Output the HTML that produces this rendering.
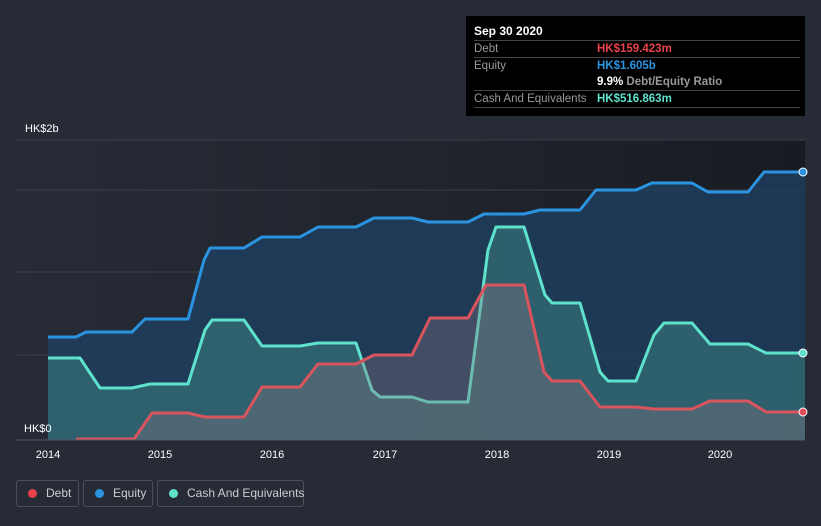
<!DOCTYPE html><html><head><style>
body{margin:0;background:#262b36;width:821px;height:526px;overflow:hidden;font-family:"Liberation Sans",sans-serif;position:relative}
.tip{position:absolute;left:466px;top:16px;width:339px;height:100px;background:#000;}
.tip .h{position:absolute;left:8px;top:8px;color:#fff;font-weight:bold;font-size:12px}
.row{position:absolute;left:8px;width:326px;border-top:1px solid #444;font-size:11.5px;color:#999;height:16px;line-height:16px;white-space:nowrap}
.row span{position:absolute;left:123px;font-weight:bold}
.leg{position:absolute;top:480px;height:27px;border:1px solid #4a4f5a;border-radius:3px;color:#ccc;font-size:12px;line-height:25px;box-sizing:border-box;white-space:nowrap}
.leg i{display:inline-block;width:9px;height:9px;border-radius:50%;margin:0 9px 0 11px;vertical-align:-1px}
</style></head><body>
<svg width="821" height="526" style="position:absolute;left:0;top:0">
<defs><linearGradient id="bg" x1="0" x2="1"><stop offset="0" stop-color="#262b36"/><stop offset="0.58" stop-color="#1f232b"/><stop offset="1" stop-color="#181b22"/></linearGradient></defs>
<rect x="16" y="140" width="789" height="300" fill="url(#bg)"/>
<line x1="16" y1="140" x2="805" y2="140" stroke="#3a3f4a"/>
<line x1="16" y1="190" x2="805" y2="190" stroke="#3a3f4a"/>
<line x1="16" y1="272" x2="805" y2="272" stroke="#3a3f4a"/>
<line x1="16" y1="355" x2="805" y2="355" stroke="#3a3f4a"/>
<polygon fill="#1e4060" fill-opacity="0.8" points="48,440 48,337 76,337 86,332 104,332 132,332 145,319 188,319 204,260 210,248 244,248 262,237 300,237 318,227 356,227 374,218 412,218 428,222 468,222 484,214 524,214 540,210 580,210 596,190 636,190 652,183 692,183 708,192 748,192 764,172 805,172 805,440"/>
<polyline fill="none" stroke="#2b94e0" stroke-width="3" stroke-linejoin="round" points="48,337 76,337 86,332 104,332 132,332 145,319 188,319 204,260 210,248 244,248 262,237 300,237 318,227 356,227 374,218 412,218 428,222 468,222 484,214 524,214 540,210 580,210 596,190 636,190 652,183 692,183 708,192 748,192 764,172 805,172"/>
<polygon fill="#3e8584" fill-opacity="0.5" points="48,440 48,358 80,358 100,388 132,388 150,384 188,384 205,330 212,320 244,320 262,346 300,346 318,343 356,343 372,390 380,397 412,397 428,402 468,402 488,250 496,227 524,227 545,295 552,303 580,303 600,372 608,381 636,381 654,335 664,323 692,323 710,344 748,344 766,353 805,353 805,440"/>
<polyline fill="none" stroke="#5ee2cc" stroke-width="3" stroke-linejoin="round" points="48,358 80,358 100,388 132,388 150,384 188,384 205,330 212,320 244,320 262,346 300,346 318,343 356,343 372,390 380,397 412,397 428,402 468,402 488,250 496,227 524,227 545,295 552,303 580,303 600,372 608,381 636,381 654,335 664,323 692,323 710,344 748,344 766,353 805,353"/>
<polygon fill="#8a7580" fill-opacity="0.35" points="76,440 76,439 134,439 152,413 188,413 205,417 244,417 262,387 300,387 318,364 356,364 374,355 412,355 430,318 468,318 486,285 524,285 544,372 552,381 580,381 600,407 636,407 654,409 692,409 710,401 748,401 766,412 805,412 805,440"/>
<polyline fill="none" stroke="#d9545c" stroke-width="3" stroke-linejoin="round" points="76,439 134,439 152,413 188,413 205,417 244,417 262,387 300,387 318,364 356,364 374,355 412,355 430,318 468,318 486,285 524,285 544,372 552,381 580,381 600,407 636,407 654,409 692,409 710,401 748,401 766,412 805,412"/>
<line x1="16" y1="440" x2="805" y2="440" stroke="#555a66"/>
<circle cx="803" cy="172" r="4" fill="#2b94e0" stroke="#fff"/>
<circle cx="803" cy="353" r="4" fill="#5ee2cc" stroke="#fff"/>
<circle cx="803" cy="412" r="4" fill="#e0505a" stroke="#fff"/>
<g fill="#fff" font-size="11" font-family="Liberation Sans">
<text x="25" y="132">HK$2b</text><text x="24" y="432">HK$0</text>
<g text-anchor="middle"><text x="48" y="458">2014</text><text x="160" y="458">2015</text><text x="272" y="458">2016</text><text x="385" y="458">2017</text><text x="497" y="458">2018</text><text x="609" y="458">2019</text><text x="720" y="458">2020</text></g>
</g>
</svg>
<div class="tip"><div class="h">Sep 30 2020</div>
<div class="row" style="top:24px">Debt<span style="color:#e8434b">HK$159.423m</span></div>
<div class="row" style="top:41px">Equity<span style="color:#2b94e0">HK$1.605b</span></div>
<div class="row" style="top:58px;border:none"><span style="color:#fff">9.9% <b style="color:#999">Debt/Equity Ratio</b></span></div>
<div class="row" style="top:74px;border-bottom:1px solid #444">Cash And Equivalents<span style="color:#5ee2cc">HK$516.863m</span></div>
</div>
<div class="leg" style="left:16px;width:63px"><i style="background:#e8434b"></i>Debt</div>
<div class="leg" style="left:83px;width:70px"><i style="background:#2b94e0"></i>Equity</div>
<div class="leg" style="left:157px;width:147px"><i style="background:#5ee2cc"></i>Cash And Equivalents</div>
</body></html>
